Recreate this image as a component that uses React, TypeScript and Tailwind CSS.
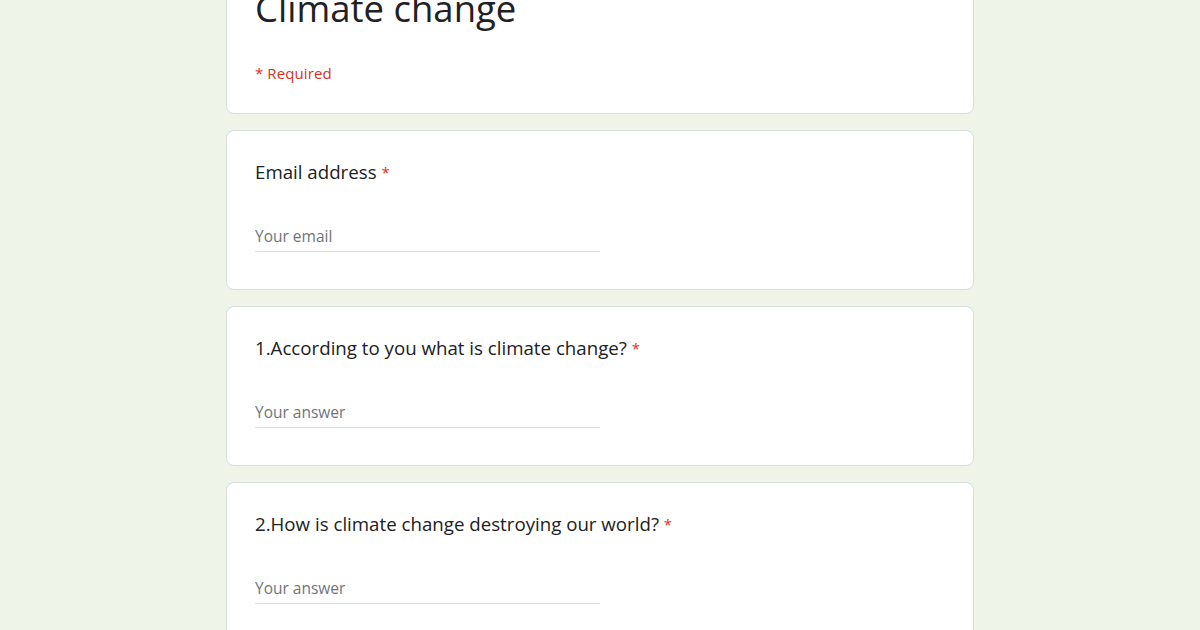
import React from 'react';

const questions = [
  { label: 'Email address', placeholder: 'Your email' },
  { label: '1.According to you what is climate change?', placeholder: 'Your answer' },
  { label: '2.How is climate change destroying our world?', placeholder: 'Your answer' },
];

const App: React.FC = () => {
  return (
    <div className="min-h-screen bg-[#eef4e7] overflow-hidden" style={{ fontFamily: '"Open Sans", Roboto, sans-serif' }}>
      <div className="w-[748px] mx-auto -mt-[29px] flex flex-col gap-4 text-[#202124]">
        {/* header card */}
        <div className="bg-white border border-[#dadce0] rounded-lg pt-[14px] pb-[30px] px-[28px]">
          <h1 className="text-[36.5px] leading-[44px] font-normal">Climate change</h1>
          <div className="mt-[33px] text-[15px] leading-5 text-[#d93025] tracking-[0.1px]">* Required</div>
        </div>

        {questions.map((q) => (
          <div key={q.label} className="bg-white border border-[#dadce0] rounded-lg pt-[29px] pb-[37px] px-[28px]">
            <div className="text-[18.7px] leading-6">
              {q.label} <span className="text-[#d93025] text-[15px] align-top">*</span>
            </div>
            <div className="mt-[37px] w-[345px] h-[31px] border-b border-[#e0e0e0] flex items-center pt-[2px]">
              <input
                placeholder={q.placeholder}
                className="w-full bg-transparent outline-none text-[15.5px] placeholder:text-[#70757a]"
              />
            </div>
          </div>
        ))}
      </div>
    </div>
  );
};

export default App;
